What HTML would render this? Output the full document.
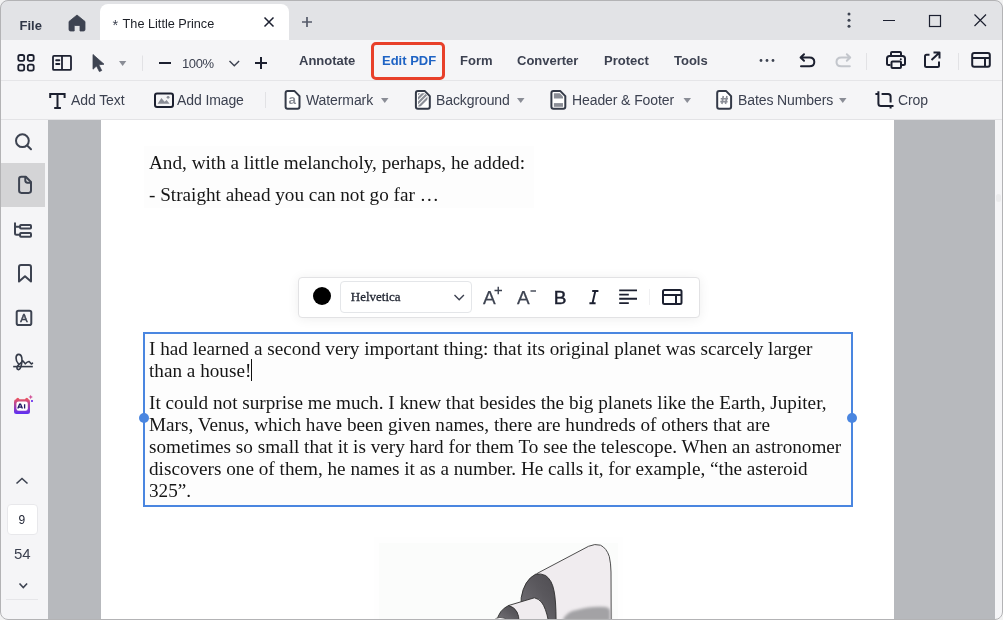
<!DOCTYPE html>
<html><head><meta charset="utf-8">
<style>
*{margin:0;padding:0;box-sizing:border-box}
html,body{width:1003px;height:620px;overflow:hidden;background:#f2f2f2;font-family:"Liberation Sans",sans-serif;}
#app{will-change:transform;position:absolute;left:0;top:0;width:1003px;height:620px;border-radius:8px;overflow:hidden;background:#f5f5f7}
#frame{position:absolute;left:0;top:0;width:1003px;height:620px;border:1px solid #b3b3b5;border-radius:8px;z-index:50;pointer-events:none}
.a{position:absolute}
svg.a{overflow:visible}
.t{position:absolute;white-space:nowrap;color:#3c4150;font-size:14px;line-height:1}
.tab1{font-weight:bold;font-size:13px;color:#3c4150;margin-top:-0.5px}
.tb2{font-size:14px;color:#3c4150;letter-spacing:-0.1px}
.serif{position:absolute;white-space:nowrap;font-family:"Liberation Serif",serif;color:#161616;font-size:19.2px;line-height:1}
</style></head><body>
<div id="app">
  <!-- title bar -->
  <div class="a" style="left:0;top:0;width:1003px;height:40px;background:#e2e3e6"></div>
  <div class="t" style="left:19.5px;top:19px;font-weight:bold;font-size:13px;color:#2f3646">File</div>
  <!-- home -->
  <svg class="a" style="left:0;top:0" width="1" height="1">
    <path d="M69 21.5 L77 15 L85 21.5 L85 29.5 Q85 31 83.5 31 L80 31 L80 25.5 L74.2 25.5 L74.2 31 L70.5 31 Q69 31 69 29.5 Z" fill="#3d4351" stroke="#3d4351" stroke-width="0.8" stroke-linejoin="round"/>
  </svg>
  <div class="a" style="left:100px;top:4px;width:189px;height:36px;background:#fff;border-radius:8px 8px 0 0"></div>
  <div class="t" style="left:112.5px;top:18px;color:#3d4351;font-size:14.5px">*</div><div class="t" style="left:122.6px;top:18px;color:#1c1f26;font-size:12.7px">The Little Prince</div>
  <svg class="a" style="left:0;top:0" width="1" height="1">
    <path d="M264.5 17.5 L273.5 26.5 M273.5 17.5 L264.5 26.5" stroke="#1c2030" stroke-width="1.5"/>
    <path d="M302 22 H312 M307 17 V27" stroke="#555b69" stroke-width="1.7"/>
    <circle cx="849" cy="14" r="1.5" fill="#3d4351"/>
    <circle cx="849" cy="20.2" r="1.5" fill="#3d4351"/>
    <circle cx="849" cy="26.2" r="1.5" fill="#3d4351"/>
    <path d="M883 20.5 H895" stroke="#1c2030" stroke-width="1.2"/>
    <rect x="929.5" y="15.5" width="11" height="11" fill="none" stroke="#1c2030" stroke-width="1.2"/>
    <path d="M974.5 14.5 L986 26 M986 14.5 L974.5 26" stroke="#1c2030" stroke-width="1.2"/>
  </svg>

  <!-- toolbar 1 -->
  <div class="a" style="left:0;top:80px;width:1003px;height:1px;background:#e5e5e8"></div>
  <svg class="a" style="left:0;top:0" width="1" height="1">
    <g fill="none" stroke="#1c2030" stroke-width="2">
      <rect x="18.3" y="55" width="5.9" height="5.9" rx="1.8" stroke-width="1.8"/>
      <rect x="27.8" y="55" width="5.9" height="5.9" rx="1.8" stroke-width="1.8"/>
      <rect x="18.3" y="64.7" width="5.9" height="5.9" rx="1.8" stroke-width="1.8"/>
      <rect x="27.8" y="64.7" width="5.9" height="5.9" rx="1.8" stroke-width="1.8"/>
      <rect x="53" y="55.9" width="18" height="14" rx="1" stroke-width="1.8"/>
      <path d="M62 55.9 V69.9" stroke-width="1.8"/>
    </g>
    <path d="M56.2 60.2 H59.3 M56.2 64 H59.3" stroke="#1c2030" stroke-width="2" stroke-linecap="round"/>
    <path d="M93 54.5 L104 64.2 L98.8 64.8 L101.7 70.5 L99.4 71.6 L96.5 66 L93 69.2 Z" fill="#3d4351" stroke="#3d4351" stroke-width="0.8" stroke-linejoin="round"/>
    <path d="M119 61 H126.3 L122.65 66 Z" fill="#8a8d96"/>
    <path d="M142.5 55.5 V71" stroke="#e2e2e5" stroke-width="1"/>
    <path d="M159 63 H171" stroke="#1c2030" stroke-width="2"/>
    <path d="M229.5 61 L234.3 65.8 L239.1 61" fill="none" stroke="#3c4150" stroke-width="1.4"/>
    <path d="M255 63 H267 M261 57 V69" stroke="#1c2030" stroke-width="2"/>
  </svg>
  <div class="t" style="left:182px;top:57px;font-size:13px;color:#3c4150;letter-spacing:-0.4px">100%</div>
  <div class="t tab1" style="left:299px;top:54px">Annotate</div>
  <div class="a" style="left:371px;top:42px;width:74px;height:38px;border:3.8px solid #e8402a;border-radius:5px;z-index:2"></div>
  <div class="t tab1" style="left:382px;top:54px;color:#1e63c4">Edit PDF</div>
  <div class="t tab1" style="left:460px;top:54px">Form</div>
  <div class="t tab1" style="left:517px;top:54px">Converter</div>
  <div class="t tab1" style="left:604px;top:54px">Protect</div>
  <div class="t tab1" style="left:674px;top:54px">Tools</div>
  <svg class="a" style="left:0;top:0" width="1" height="1">
    <circle cx="761" cy="60.5" r="1.4" fill="#3d4351"/>
    <circle cx="767" cy="60.5" r="1.4" fill="#3d4351"/>
    <circle cx="773" cy="60.5" r="1.4" fill="#3d4351"/>
    <path d="M801 57.5 H809.5 Q814.3 57.5 814.3 62 Q814.3 66.3 809.5 66.3 H801 M804 54.2 L800.6 57.5 L804 60.8" fill="none" stroke="#1c2030" stroke-width="2" stroke-linecap="round" stroke-linejoin="round"/>
    <path d="M849.8 57.5 H841.3 Q836.5 57.5 836.5 62 Q836.5 66.3 841.3 66.3 H849.8 M846.8 54.2 L850.2 57.5 L846.8 60.8" fill="none" stroke="#c3c6cc" stroke-width="2" stroke-linecap="round" stroke-linejoin="round"/>
    <path d="M866.5 53 V70" stroke="#e2e2e5" stroke-width="1"/>
    <g fill="none" stroke="#1c2030" stroke-width="2" stroke-linejoin="round">
      <path d="M891 56 V53 Q891 52 892 52 H900 Q901 52 901 53 V56"/>
      <path d="M890.5 65 H888.5 Q887 65 887 63.5 V58.5 Q887 56 889.5 56 H902.5 Q905 56 905 58.5 V63.5 Q905 65 903.5 65 H901.5"/>
      <rect x="891.5" y="61.5" width="9.5" height="6.5" rx="1"/>
      <path d="M929.5 54.8 H926.5 Q925 54.8 925 56.3 V65.5 Q925 67 926.5 67 H937.5 Q939 67 939 65.5 V61.5"/>
      <path d="M933.5 52.5 H939.5 V58.5 M939 53 L931.5 60"/>
    </g>
    <circle cx="900.8" cy="59.3" r="1" fill="#1c2030"/>
    <path d="M958.5 53 V70" stroke="#e2e2e5" stroke-width="1"/>
    <g fill="none" stroke="#1c2030" stroke-width="2">
      <rect x="972.2" y="53.1" width="17.6" height="13.7" rx="2"/>
      <path d="M972.2 58 H989.8 M985 58 V66.8"/>
    </g>
  </svg>

  <!-- toolbar 2 -->
  <div class="a" style="left:0;top:119px;width:1003px;height:1px;background:#e3e3e6"></div>
  <svg class="a" style="left:0;top:0" width="1" height="1">
    <g fill="none" stroke="#1c2030" stroke-width="2">
      <path d="M50.2 97.9 V93.9 H64.6 V97.9"/>
      <path d="M57.5 93.9 V108 M54.2 108 H60.9"/>
    </g>
    <rect x="155" y="93.5" width="18" height="13.5" rx="2" fill="none" stroke="#1c2030" stroke-width="2"/>
    <path d="M157.6 103.8 L161.4 98 L164.6 101.8 L166.6 99.9 L169.6 103.8 Z" fill="#8a8d96"/>
    <circle cx="168.1" cy="97.3" r="1.4" fill="#8a8d96"/>
    <path d="M265.5 92 V108" stroke="#e2e2e5" stroke-width="1"/>
    <!-- watermark -->
    <path d="M285.6 93.1 Q285.6 91.1 287.6 91.1 H294.6 L299.5 96.1 V106.7 Q299.5 108.7 297.5 108.7 H287.6 Q285.6 108.7 285.6 106.7 Z" fill="#fff" stroke="#343a48" stroke-width="2" stroke-linejoin="round"/>
    <text x="288.6" y="103.8" style="font-family:'Liberation Sans';font-weight:bold;font-size:13.5px" fill="#8a8d96">a</text>
    <path d="M381 98 H388.5 L384.75 103 Z" fill="#8a8d96"/>
    <!-- background -->
    <clipPath id="bgclip"><path d="M418 93.2 H425 L427.5 95.7 V106.5 H418 Z"/></clipPath>
    <path d="M415.9 93.1 Q415.9 91.1 417.9 91.1 H424.9 L429.79999999999995 96.1 V106.7 Q429.79999999999995 108.7 427.79999999999995 108.7 H417.9 Q415.9 108.7 415.9 106.7 Z" fill="#fff" stroke="#343a48" stroke-width="2" stroke-linejoin="round"/>
    <g clip-path="url(#bgclip)" stroke="#8a8d96" stroke-width="2.2">
      <path d="M412 100 L422 90 M412 104.5 L426.5 90 M414 107 L430 91 M418.5 107 L431 94.5"/>
    </g>
    <path d="M517 98 H524.5 L520.75 103 Z" fill="#8a8d96"/>
    <!-- header footer -->
    <path d="M551.4 93.1 Q551.4 91.1 553.4 91.1 H560.4 L565.3 96.1 V106.7 Q565.3 108.7 563.3 108.7 H553.4 Q551.4 108.7 551.4 106.7 Z" fill="#fff" stroke="#343a48" stroke-width="2" stroke-linejoin="round"/>
    <path d="M553.9 93.2 H559.8 L563 96.4 V98.6 H553.9 Z" fill="#8a8d96"/>
    <rect x="553.9" y="103.1" width="9.1" height="3.7" fill="#8a8d96"/>
    <path d="M683.5 98 H691 L687.25 103 Z" fill="#8a8d96"/>
    <!-- bates -->
    <path d="M717.2 93.1 Q717.2 91.1 719.2 91.1 H726.2 L731.1 96.1 V106.7 Q731.1 108.7 729.1 108.7 H719.2 Q717.2 108.7 717.2 106.7 Z" fill="#fff" stroke="#343a48" stroke-width="2" stroke-linejoin="round"/>
    <path d="M723.3 96 L721.9 104 M726.9 96 L725.5 104 M720.7 98.8 H728 M720.3 101.6 H727.6" stroke="#8a8d96" stroke-width="1.6"/>
    <path d="M839 98 H846.5 L842.75 103 Z" fill="#8a8d96"/>
    <!-- crop -->
    <g fill="none" stroke="#1c2030" stroke-width="2" stroke-linecap="butt">
      <path d="M878.4 91.2 V103.4 Q878.4 105.9 880.9 105.9 H893.5 M875.4 93.9 H878.4"/>
      <path d="M881.6 93.9 H888.1 Q890.6 93.9 890.6 96.4 V102.4 M890.6 105.9 V108.4"/>
    </g>
  </svg>
  <div class="t tb2" style="left:71px;top:93px">Add Text</div>
  <div class="t tb2" style="left:177px;top:93px">Add Image</div>
  <div class="t tb2" style="left:306px;top:93px">Watermark</div>
  <div class="t tb2" style="left:436px;top:93px">Background</div>
  <div class="t tb2" style="left:572px;top:93px">Header &amp; Footer</div>
  <div class="t tb2" style="left:738px;top:93px">Bates Numbers</div>
  <div class="t tb2" style="left:898px;top:93px">Crop</div>

  <!-- sidebar -->
  <div class="a" style="left:1px;top:163px;width:44px;height:44px;background:#d4d4d6"></div>
  <svg class="a" style="left:0;top:0" width="1" height="1">
    <g fill="none" stroke="#3d4351" stroke-width="2" stroke-linecap="round" stroke-linejoin="round">
      <circle cx="22.4" cy="140.7" r="6.4"/>
      <path d="M27.4 145.7 L31 149.3"/>
      <path d="M19.1 179 Q19.1 176.7 21.4 176.7 H25.8 L31 182 V190.6 Q31 192.9 28.7 192.9 H21.4 Q19.1 192.9 19.1 190.6 Z"/>
      <path d="M25.3 176.9 V180.6 Q25.3 182.7 27.4 182.7 H30.8"/>
      <path d="M15 222.6 V233.2 Q15 234.7 16.5 234.7 H20 M15 226.7 H20" stroke-linecap="butt"/>
      <rect x="20.1" y="225.1" width="10.9" height="3.4" rx="0.8"/>
      <rect x="20.1" y="233.1" width="10.9" height="3.6" rx="0.8"/>
      <path d="M19 267 Q19 265 21 265 H29 Q31 265 31 267 V281.5 L25 276.2 L19 281.5 Z"/>
      <rect x="16.7" y="310.7" width="14.6" height="14.4" rx="1.8"/>
    </g>
    <text x="20.2" y="321.9" style="font-family:'Liberation Sans';font-size:11px" fill="#3d4351" stroke="#3d4351" stroke-width="0.5">A</text>
    <path d="M13.2 366.6 H32.8" stroke="#343a48" stroke-width="1.6"/>
    <path d="M18.2 363.5 C15.5 360.5 15 354.6 18.7 354.4 C22.3 354.3 22.4 360 21.6 363.8 C21 367 20.3 369.7 18.4 369.6 C16.5 369.5 16.4 367 18.2 365.3 C19.8 363.8 21.5 362.2 22.9 361 C23.8 361.6 24.6 363.2 25.3 363.8 C26.5 362.5 27.8 361.2 29.2 361.6 C30 362.2 30.8 363.6 31.6 364 L32.5 363.2" fill="none" stroke="#343a48" stroke-width="1.6" stroke-linecap="round" stroke-linejoin="round"/>
    <defs>
      <linearGradient id="aig" x1="0" y1="0" x2="0" y2="1">
        <stop offset="0" stop-color="#f0565c"/>
        <stop offset="1" stop-color="#5b2ef6"/>
      </linearGradient>
    </defs>
    <path d="M14 402 Q14 399.3 16 399.3 Q16.5 397.8 17.8 397.8 Q19 397.8 19.5 399.3 H25 Q25.5 397.8 26.8 397.8 Q28 397.8 28.5 399.3 Q30 399.5 30 402 V411.5 Q30 414 27.5 414 H16.5 Q14 414 14 411.5 Z" fill="url(#aig)"/>
    <rect x="16.4" y="401.6" width="11.4" height="9.2" rx="2.2" fill="#fff"/>
    <path d="M17.8 408.6 L19.6 404.2 H20.6 L22.4 408.6 M18.6 407.2 H21.6 M24.6 404.2 V408.6" fill="none" stroke="#1c1660" stroke-width="1.3"/>
    <path d="M30.7 394.8 Q31 396.7 32.9 397 Q31 397.3 30.7 399.2 Q30.4 397.3 28.5 397 Q30.4 396.7 30.7 394.8 Z" fill="#d2559a"/>
    <rect x="31" y="400" width="2" height="2" fill="#7d4cf0"/>
    <path d="M16.5 483.5 L22 478.5 L27.5 483.5" fill="none" stroke="#3d4351" stroke-width="1.6"/>
    <path d="M19.5 583.5 L23.3 587.5 L27.1 583.5" fill="none" stroke="#3d4351" stroke-width="1.6"/>
    <path d="M6 599.5 H38" stroke="#e6e6e9" stroke-width="1"/>
  </svg>
  <div class="a" style="left:6.5px;top:503.5px;width:31px;height:31.5px;background:#fff;border:1px solid #e8e8eb;border-radius:4px"></div>
  <div class="t" style="left:18.5px;top:514px;font-size:12px;color:#1c2030">9</div>
  <div class="t" style="left:14px;top:546px;font-size:15px;color:#3c4150">54</div>

  <!-- canvas -->
  <div class="a" style="left:48px;top:120px;width:947px;height:500px;background:#b7b9bd"></div>
  <div class="a" style="left:995px;top:120px;width:8px;height:500px;background:#f5f5f7"></div>
  <div class="a" style="left:996px;top:194px;width:5px;height:8px;background:#ebebed;border-radius:3px"></div>
  <div class="a" style="left:101px;top:120px;width:793px;height:500px;background:#fff"></div>

  <!-- text block 1 -->
  <div class="a" style="left:144px;top:146px;width:390px;height:62px;background:#fdfdfd"></div>
  <div class="serif" style="left:149px;top:153px">And, with a little melancholy, perhaps, he added:</div>
  <div class="serif" style="left:149px;top:185px">- Straight ahead you can not go far …</div>

  <!-- floating toolbar -->
  <div class="a" style="left:298px;top:276.5px;width:401.5px;height:41.5px;background:#fff;border:1px solid #e2e2e4;border-radius:4px;box-shadow:0 1px 12px rgba(0,0,0,0.07)"></div>
  <svg class="a" style="left:0;top:0" width="1" height="1">
    <circle cx="322" cy="296" r="9" fill="#000"/>
  </svg>
  <div class="a" style="left:340px;top:281px;width:132px;height:32px;background:#fff;border:1px solid #e4e6e9;border-radius:4px"></div>
  <div class="serif" style="left:350.8px;top:290px;font-size:13px;color:#1f2430;-webkit-text-stroke:0.3px #1f2430">Helvetica</div>
  <svg class="a" style="left:0;top:0" width="1" height="1">
    <path d="M454.5 295 L459.2 299.7 L463.9 295" fill="none" stroke="#3c4150" stroke-width="1.4"/>
    <path d="M494.5 290.5 H502 M498.25 286.8 V294.2" stroke="#3d4351" stroke-width="1.4"/>
    <path d="M530.5 291 H536" stroke="#3d4351" stroke-width="1.4"/>
    <path d="M619.2 290.4 H637 M619.2 294.6 H628.8 M619.2 298.8 H637 M619.2 303.1 H628.8" stroke="#1c2030" stroke-width="1.9"/>
    <path d="M592.2 291 H598.4 M589.4 303.2 H595.6 M595.3 291 L592.5 303.2" fill="none" stroke="#1c2030" stroke-width="1.9"/>
    <path d="M649.5 289 V305" stroke="#f0f0f2" stroke-width="1"/>
    <g fill="none" stroke="#1c2030" stroke-width="2">
      <rect x="663" y="290" width="18.5" height="14" rx="1.5"/>
      <path d="M663 295 H681.5 M676 295 V304"/>
    </g>
  </svg>
  <div class="t" style="left:483px;top:288.2px;font-size:19px;color:#3d4351;-webkit-text-stroke:0.25px #3d4351">A</div>
  <div class="t" style="left:517px;top:288.2px;font-size:19px;color:#3d4351;-webkit-text-stroke:0.25px #3d4351">A</div>
  <div class="t" style="left:553.8px;top:288.2px;font-size:19px;color:#1c2030;-webkit-text-stroke:0.45px #1c2030">B</div>
  

  <!-- selected text box -->
  <div class="a" style="left:143px;top:332px;width:710px;height:175px;border:2px solid #4a86e0;background:#fdfdfd"></div>
  <div class="serif" style="left:149px;top:338.7px">I had learned a second very important thing: that its original planet was scarcely larger</div>
  <div class="serif" style="left:149px;top:360.7px">than a house!</div>
  <div class="a" style="left:251px;top:359px;width:1.2px;height:22px;background:#111"></div>
  <div class="serif" style="left:149px;top:392.7px">It could not surprise me much. I knew that besides the big planets like the Earth, Jupiter,</div>
  <div class="serif" style="left:149px;top:414.7px">Mars, Venus, which have been given names, there are hundreds of others that are</div>
  <div class="serif" style="left:149px;top:436.7px">sometimes so small that it is very hard for them To see the telescope. When an astronomer</div>
  <div class="serif" style="left:149px;top:458.7px">discovers one of them, he names it as a number. He calls it, for example, “the asteroid</div>
  <div class="serif" style="left:149px;top:480.7px">325”.</div>
  <svg class="a" style="left:0;top:0" width="1" height="1">
    <circle cx="144" cy="418" r="5" fill="#4a86e0"/>
    <circle cx="852" cy="418" r="5" fill="#4a86e0"/>
  </svg>

  <!-- telescope image -->
  <div class="a" style="left:374px;top:537px;width:249px;height:83px;background:#fefefe"></div>
  <div class="a" style="left:379px;top:543px;width:239px;height:77px;background:#fbfcfb"></div>
  <svg class="a" style="left:0;top:0" width="1" height="1">
    <defs><filter id="blur1" x="-20%" y="-50%" width="140%" height="200%"><feGaussianBlur stdDeviation="1.8"/></filter><linearGradient id="ring" x1="0" y1="1" x2="1" y2="0"><stop offset="0" stop-color="#77757a"/><stop offset="0.6" stop-color="#5a585d"/><stop offset="1" stop-color="#4e4c51"/></linearGradient></defs>
    <path d="M537.2 573.4 L588.5 546.3 Q595 543.4 600.5 545.2 Q606.5 548 609.3 556.5 Q610.9 563.5 611 572 L611.2 621 L548 621 Z" fill="#f0ecef" stroke="#3a3a3a" stroke-width="0.9"/>
    <path d="M562.4 621 Q566 611 577.7 609.7 Q590 606 605.6 606.9 Q609 607.5 610.2 610 L610.2 621 Z" fill="#a3a2a5" filter="url(#blur1)"/>
    <path d="M521.2 597.8 Q524 580 535.8 574.1 Q541 573.3 545.6 575.5 Q552 580 554 590.8 Q556 600 556.1 621 L521 621 Z" fill="url(#ring)" stroke="#2e2e2e" stroke-width="0.9"/>
    <path d="M508.6 605.5 L534.4 597.8 Q538.5 598.8 541.4 602 Q546 608 548.4 621 L503 621 Z" fill="#f0ecef" stroke="#2e2e2e" stroke-width="0.9"/>
    <path d="M496.8 621 Q499 610 508.6 605.5 Q514.5 607 517 612 Q519 616 519 621 Z" fill="url(#ring)" stroke="#2e2e2e" stroke-width="0.9"/>
    <path d="M493.3 621 Q496 617.4 500 617.4 Q506 617.6 508 621 Z" fill="#f2f0f2" stroke="#2e2e2e" stroke-width="0.6"/>
  </svg>
</div>
<div id="frame"></div>
</body></html>
